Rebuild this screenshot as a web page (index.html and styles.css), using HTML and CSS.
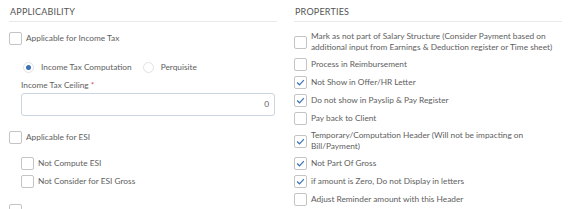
FILE: index.html
```html
<!DOCTYPE html>
<html lang="en">
<head>
    <meta charset="UTF-8">
    <title>Pay Head Settings</title>
    <link rel="stylesheet" href="styles.css">
</head>
<body>

    <div class="settings">

        <!-- Applicability -->
        <section class="panel">
            <h3 class="panel-title">APPLICABILITY</h3>

            <label class="check check-top">
                <span class="box"></span>
                <span class="text">Applicable for Income Tax</span>
            </label>

            <div class="radios">
                <label class="radio is-on"><span class="dot"></span>Income Tax Computation</label>
                <label class="radio"><span class="dot"></span>Perquisite</label>
            </div>

            <div class="field">
                <div class="field-label">Income Tax Ceiling <span class="req">*</span></div>
                <div class="input">0</div>
            </div>

            <label class="check check-esi">
                <span class="box"></span>
                <span class="text">Applicable for ESI</span>
            </label>

            <div class="sub">
                <label class="check">
                    <span class="box"></span>
                    <span class="text">Not Compute ESI</span>
                </label>
                <label class="check">
                    <span class="box"></span>
                    <span class="text">Not Consider for ESI Gross</span>
                </label>
            </div>

            <label class="check check-last">
                <span class="box"></span>
            </label>
        </section>

        <!-- Properties -->
        <section class="panel">
            <h3 class="panel-title">PROPERTIES</h3>

            <div class="props">
                <label class="check">
                    <span class="box"></span>
                    <span class="text">Mark as not part of Salary Structure (Consider Payment based on additional input from Earnings &amp; Deduction register or Time sheet)</span>
                </label>
                <label class="check">
                    <span class="box"></span>
                    <span class="text">Process in Reimbursement</span>
                </label>
                <label class="check">
                    <span class="box"><svg viewBox="0 0 13 13"><polyline points="2.5,6.5 5.3,9.2 10.5,3.6"/></svg></span>
                    <span class="text">Not Show in Offer/HR Letter</span>
                </label>
                <label class="check">
                    <span class="box"><svg viewBox="0 0 13 13"><polyline points="2.5,6.5 5.3,9.2 10.5,3.6"/></svg></span>
                    <span class="text">Do not show in Payslip &amp; Pay Register</span>
                </label>
                <label class="check">
                    <span class="box"></span>
                    <span class="text">Pay back to Client</span>
                </label>
                <label class="check">
                    <span class="box"><svg viewBox="0 0 13 13"><polyline points="2.5,6.5 5.3,9.2 10.5,3.6"/></svg></span>
                    <span class="text">Temporary/Computation Header (Will not be impacting on Bill/Payment)</span>
                </label>
                <label class="check">
                    <span class="box"><svg viewBox="0 0 13 13"><polyline points="2.5,6.5 5.3,9.2 10.5,3.6"/></svg></span>
                    <span class="text">Not Part Of Gross</span>
                </label>
                <label class="check">
                    <span class="box"><svg viewBox="0 0 13 13"><polyline points="2.5,6.5 5.3,9.2 10.5,3.6"/></svg></span>
                    <span class="text">if amount is Zero, Do not Display in letters</span>
                </label>
                <label class="check">
                    <span class="box"></span>
                    <span class="text">Adjust Reminder amount with this Header</span>
                </label>
            </div>
        </section>

    </div>

</body>
</html>
```

FILE: styles.css
```css
/* Basic Styling */
body {
    margin: 0;
    font-family: Lato, "Liberation Sans", sans-serif;
    font-size: 8.3px;
    color: #606060;
    background-color: #fff;
    overflow: hidden;
}

.settings {
    display: grid;
    grid-template-columns: 1fr 1fr;
    column-gap: 17px;
    padding: 0 14px 0 9px;
}

/* Panel headers */
.panel-title {
    margin: 0;
    padding: 6px 0 4px 1px;
    line-height: 11px;
    font-size: 9px;
    font-weight: normal;
    letter-spacing: 0.2px;
    color: #555;
    border-bottom: 1px solid #e9e9e9;
}

/* Checkboxes */
.check {
    display: flex;
    align-items: center;
    gap: 4px;
    line-height: 11px;
}

.box {
    flex: none;
    width: 13px;
    height: 13px;
    box-sizing: border-box;
    border: 1px solid #c4c4c4;
    border-radius: 2px;
    background: #fff;
}

.box svg {
    display: block;
    width: 11px;
    height: 11px;
}

.box polyline {
    fill: none;
    stroke: #3a72b4;
    stroke-width: 1.4;
}

.check-top {
    margin-top: 10px;
}

.check-esi {
    margin-top: 15px;
}

.check-last {
    margin-top: 16px;
}

.sub {
    display: flex;
    flex-direction: column;
    gap: 5px;
    margin: 13px 0 0 12px;
}

/* Radios */
.radios {
    display: flex;
    gap: 11px;
    margin: 17px 0 0 14px;
    line-height: 11px;
}

.radio {
    display: flex;
    align-items: center;
    gap: 7px;
}

.dot {
    width: 11px;
    height: 11px;
    box-sizing: border-box;
    border: 1px solid #e2e2e2;
    border-radius: 50%;
    position: relative;
}

.radio.is-on .dot::after {
    content: "";
    position: absolute;
    left: 2px;
    top: 2px;
    width: 5px;
    height: 5px;
    border-radius: 50%;
    background: #3a72b4;
}

/* Input */
.field {
    margin: 7px 0 0 12px;
}

.field-label {
    line-height: 11px;
    margin-bottom: 2px;
}

.req {
    color: #d9534f;
}

.input {
    height: 23px;
    box-sizing: border-box;
    border: 1px solid #c9d5e2;
    border-radius: 3px;
    text-align: right;
    padding-right: 5px;
    line-height: 21px;
    margin-right: 2px;
}

/* Properties list */
.props {
    display: flex;
    flex-direction: column;
    gap: 5px;
    margin-top: 9px;
}
```
